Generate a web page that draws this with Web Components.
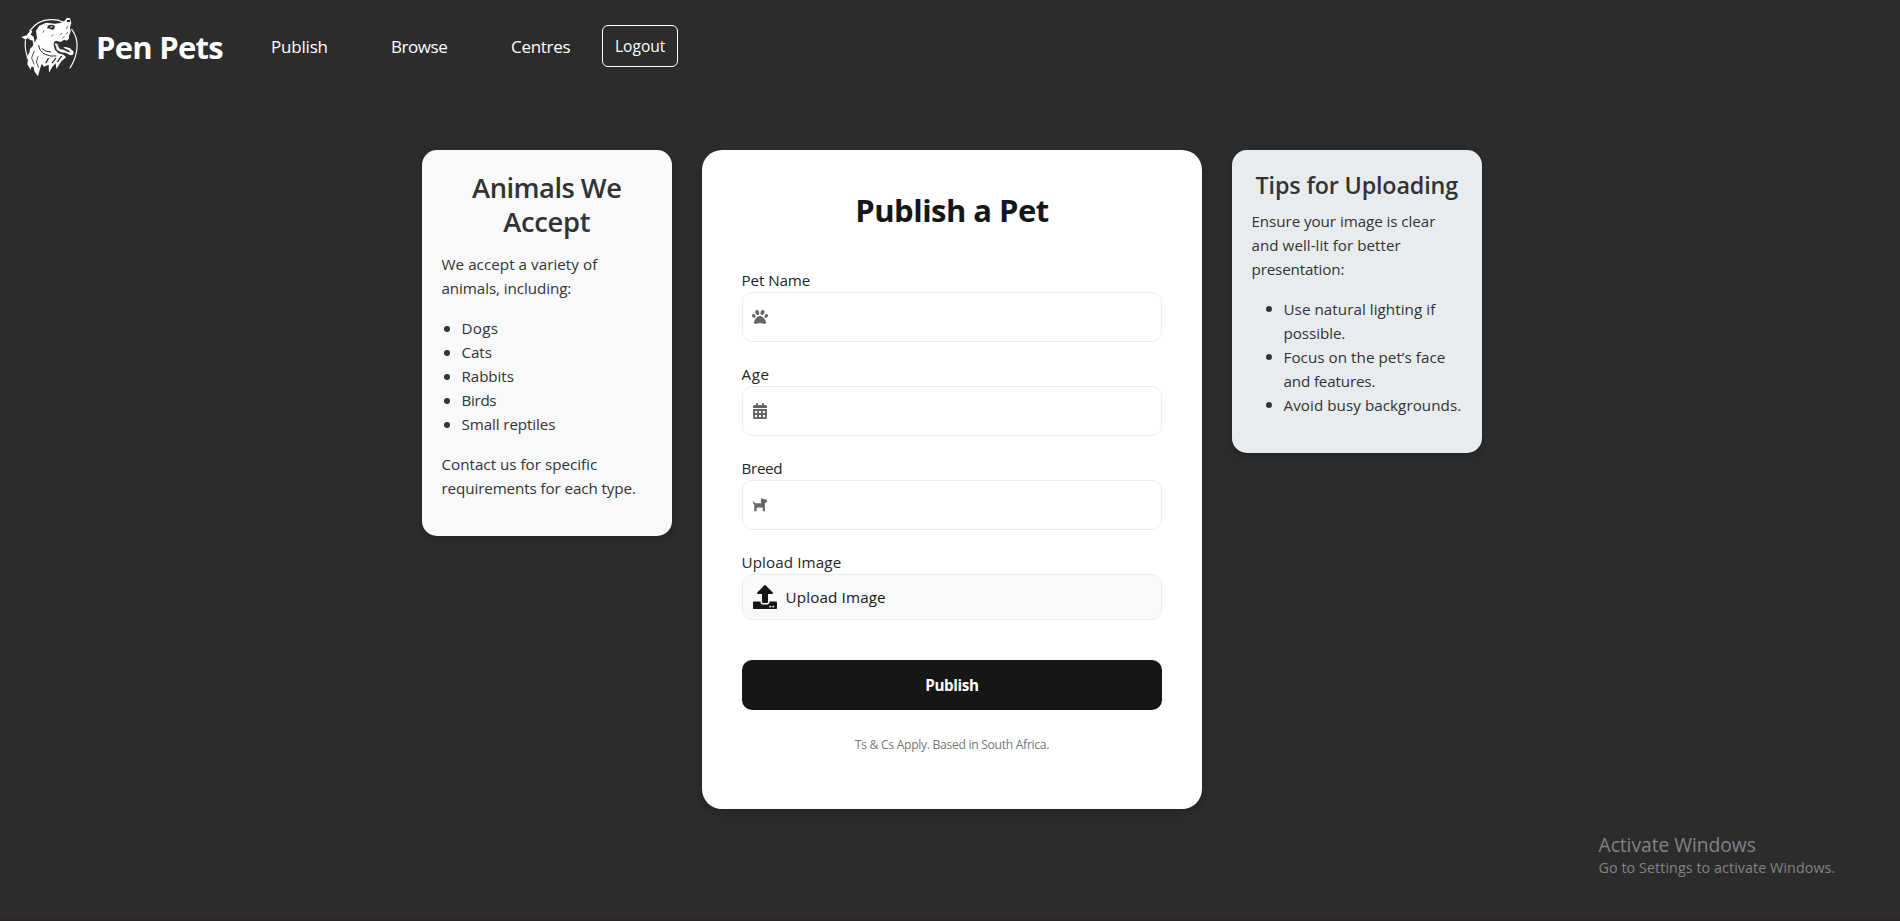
<!DOCTYPE html>
<html lang="en">
<head>
<meta charset="utf-8">
<title>Pen Pets</title>
<style>
html,body{margin:0;height:100%}
body{background:#2c2c2c;font-family:"Open Sans","Noto Sans",sans-serif;overflow:hidden}
</style>
</head>
<body>
<pets-app></pets-app>
<script>
const define = (name, html, setup) => {
  const t = document.createElement('template');
  t.innerHTML = html;
  customElements.define(name, class extends HTMLElement {
    connectedCallback() {
      if (this.shadowRoot) return;
      this.attachShadow({mode: 'open'}).append(t.content.cloneNode(true));
      if (setup) setup(this, this.shadowRoot);
    }
  });
};

/* One line of text, tracked so that it fills the width given in "w", side bearings included. */
const BEARING = 1.2;
define('text-line', `<style>:host{display:block;white-space:nowrap}span{display:inline-block}</style><span><slot></slot></span>`,
  (el, root) => {
    const s = root.querySelector('span');
    const w = parseFloat(el.getAttribute('w'));
    const n = el.textContent.length;
    if (w) s.style.letterSpacing = ((w - BEARING - s.getBoundingClientRect().width) / n).toFixed(3) + 'px';
  });

define('pets-logo', `<style>:host{display:block;width:64px;height:66px}svg{display:block}</style>
<svg width="64" height="66" viewBox="0 0 192 198">
 <g fill="none" stroke="#fff" stroke-linecap="round">
  <path d="M36 50Q58 18 98 17Q120 16 134 24" stroke-width="4"/>
  <path d="M161 46Q180 70 177 104Q173 136 156 162" stroke-width="3.500"/>
  <path d="M22 80Q19 112 33 138" stroke-width="3.500"/>
 </g>
 <path fill="#fff" d="M10 69L26 64L38 49L43 52L38 62L47 68L50 86L57 72L54 50L64 35L84 26L111 29L127 27L140 20L147 11L156 13L160 26L156 40L158 52L153 66L153 74L146 80L139 77L128 84L114 80L108 84L107 94L111 107L121 118L137 122L144 130L130 142L121 156L115 165L113 148L103 158L93 176L92 152L78 158L71 150L65 168L60 187L50 174L46 158L40 158L38 168L28 151L30 137L25 130L34 116L36 105L46 94L44 80L36 77L29 72L23 77Z"/>
 <path fill="#fff" d="M110 88L120 90L132 101L143 99L156 103L167 113L165 122L157 124L144 117L129 115L117 108Z"/>
 <path fill="#2c2c2c" d="M117 91L129 94L139 103L151 108L158 116L148 113L137 107L126 106Z"/>
 <path fill="#2c2c2c" d="M89 36Q99 28 111 36L108 46Q99 50 94 43L88 45Z"/>
 <path fill="#fff" d="M96 38L102 36L104 39L99 41Z"/>
 <path fill="#2c2c2c" d="M147 18L155 17L157 23L151 25L146 23Z"/>
 <g fill="none" stroke="#2c2c2c" stroke-linecap="round">
  <path d="M62 94Q64 113 82 121Q98 129 114 126M72 104Q84 115 98 114" stroke-width="3"/>
  <path d="M48 112L41 132L48 150M60 128L55 144L62 160" stroke-width="2.500"/>
  <path d="M91 134L84 146M113 133L103 146M130 127L119 143" stroke-width="4"/>
  <path d="M150 36L145 45M149 55L144 61M139 68L134 72M131 58L127 63M78 50L75 55M105 62L101 66" stroke-width="2"/>
 </g>
</svg>`);

const glyphs = {
  paw: [16, 16, '0 0 512 512', '<path d="M226.500 92.900c14.300 42.900-.3 86.200-32.600 96.800s-70.100-15.600-84.400-58.500s.3-86.200 32.600-96.800s70.100 15.600 84.400 58.500zM100.400 198.600c18.900 32.400 14.300 70.100-10.200 84.100s-59.700-.9-78.500-33.300S-2.700 179.300 21.800 165.300s59.700 .9 78.500 33.300zM69.200 401.200C121.600 259.900 214.700 224 256 224s134.400 35.900 186.800 177.200c3.600 9.700 5.200 20.100 5.200 30.500v1.600c0 25.800-20.900 46.700-46.700 46.700c-11.500 0-22.900-1.400-34-4.200l-88-22c-15.300-3.800-31.300-3.800-46.600 0l-88 22c-11.100 2.800-22.500 4.200-34 4.200C84.900 480 64 459.100 64 433.300v-1.600c0-10.400 1.600-20.800 5.200-30.500zM421.800 282.700c-24.500-14-29.100-51.700-10.200-84.100s54-47.300 78.500-33.300s29.100 51.700 10.200 84.100s-54 47.300-78.500 33.300zM310.100 189.700c-32.300-10.600-46.900-53.900-32.600-96.800s52.100-69.100 84.400-58.500s46.900 53.900 32.600 96.800s-52.100 69.100-84.400 58.500z"/>'],
  calendar: [14, 16, '0 0 14 16', '<path fill-rule="evenodd" d="M3 1a1 1 0 0 1 2 0v1h4V1a1 1 0 0 1 2 0v1h1.500A1.500 1.500 0 0 1 14 3.500V5H0V3.500A1.500 1.500 0 0 1 1.500 2H3zM0 6h14v8.500a1.500 1.500 0 0 1-1.500 1.500h-11A1.500 1.500 0 0 1 0 14.500zM2 8v2h2V8zM6 8v2h2V8zM10 8v2h2V8zM2 12v2h2v-2zM6 12v2h2v-2zM10 12v2h2v-2z"/>'],
  dog: [14, 14, '0 0 14 14', '<path d="M0 3.300L1.300 3.900L2 5.200H8.300L7.900 4.200V1.200L8.300 0L9.600.7L13.700 1.800L14 2.500L13.600 4.300L11.900 5.200V13.200H9.700V9.400H4.800L3.600 10.300V13.200H1.300V6.500L.2 5.500Z"/>'],
  upload: [24, 24, '0 0 512 512', '<path d="M296 384h-80c-13.300 0-24-10.700-24-24V192h-87.700c-17.800 0-26.700-21.500-14.100-34.100L242.300 5.700c7.500-7.500 19.800-7.500 27.300 0l152.200 152.200c12.600 12.600 3.700 34.100-14.100 34.100H320v168c0 13.300-10.700 24-24 24zm216-8v112c0 13.300-10.700 24-24 24H24c-13.300 0-24-10.700-24-24V376c0-13.300 10.700-24 24-24h136v8c0 30.900 25.100 56 56 56h80c30.900 0 56-25.100 56-56v-8h136c13.300 0 24 10.700 24 24zm-124 88c0-11-9-20-20-20s-20 9-20 20 9 20 20 20 20-9 20-20zm64 0c0-11-9-20-20-20s-20 9-20 20 9 20 20 20 20-9 20-20z"/>']
};
define('pet-icon', `<style>:host{display:block;flex:none}svg{display:block;fill:currentColor}</style>`, (el, root) => {
  const [w, h, box, body] = glyphs[el.getAttribute('name')];
  root.innerHTML += `<svg width="${w}" height="${h}" viewBox="${box}">${body}</svg>`;
});

define('pets-nav', `<style>
:host{display:flex;align-items:center;height:93px;color:#fff;box-sizing:border-box;padding-left:18px}
.brand{font:bold 31px/40px "Open Sans",sans-serif;margin-left:14px;width:175px}
.link{font-size:17px;font-weight:500;line-height:24px;margin-top:1px;width:120px}
.link.last{width:91px}
button{all:unset;box-sizing:border-box;width:76px;height:42px;border:1px solid #fff;border-radius:6px;font-size:15.500px;line-height:24px;padding:8px 0 8px 12px;margin-top:-1px}
</style>
<pets-logo></pets-logo>
<text-line class="brand" w="128">Pen Pets</text-line>
<text-line class="link" w="58">Publish</text-line>
<text-line class="link" w="57.500">Browse</text-line>
<text-line class="link last" w="60.500">Centres</text-line>
<button><text-line w="51.500">Logout</text-line></button>`);

define('info-card', `<style>
:host{display:block;box-sizing:border-box;width:250px;padding:20px 20px var(--foot,36px) 19.500px;border-radius:15px;background:var(--card,#f8f9fb);color:#333;box-shadow:0 4px 10px rgba(0,0,0,.2);font-size:15.200px;line-height:24px}
header{text-align:center;font-weight:600;font-size:var(--title,27.300px);line-height:var(--lead,33.600px);padding-top:1px;margin-bottom:var(--gap,14px)}
</style><header><slot name="title"></slot></header><slot></slot>`);

define('bullet-list', `<style>:host{display:block;margin:16px 0;padding-left:var(--indent,20px)}:host(:last-child){margin-bottom:0}</style><slot></slot>`);
define('bullet-item', `<style>:host{display:block;position:relative}
i{position:absolute;left:-18px;top:9.500px;width:6px;height:6px;border-radius:50%;background:#333}</style><i></i><slot></slot>`);

define('form-field', `<style>
:host{display:block;margin-bottom:20px;color:#212529;font-size:15.200px;line-height:24px}
.label{margin-left:-.5px}
.box{box-sizing:border-box;height:50px;border:1px solid #ececec;border-radius:10px;display:flex;align-items:center;padding-left:10px;color:#666;background:#fff}
:host([upload]) .box{height:46px;background:#f8f9fb;color:#151716;gap:8.500px}
</style><div class="label"><slot name="label"></slot></div><div class="box"><slot></slot></div>`);

define('publish-form', `<style>
:host{display:block;box-sizing:border-box;width:500px;height:659px;padding:40px;border-radius:20px;background:#fff;box-shadow:0 4px 10px rgba(0,0,0,.2)}
h1{margin:0 0 38px;font:bold 31px/40px "Open Sans",sans-serif;text-align:center;color:#151716}
button{all:unset;box-sizing:border-box;display:block;width:100%;height:50px;margin-top:40px;border-radius:10px;background:#151716;color:#fff;font-size:15.200px;line-height:50px;font-weight:bold;text-align:center}
footer{margin-top:25px;text-align:center;font-size:12.200px;line-height:20px;color:#777}
.icon-paw{margin-left:-1px}
</style>
<h1><text-line w="194.500">Publish a Pet</text-line></h1>
<form-field><text-line slot="label" w="70">Pet Name</text-line><pet-icon class="icon-paw" name="paw"></pet-icon></form-field>
<form-field><text-line slot="label" w="29.500">Age</text-line><pet-icon name="calendar"></pet-icon></form-field>
<form-field><text-line slot="label" w="42">Breed</text-line><pet-icon name="dog"></pet-icon></form-field>
<form-field upload><text-line slot="label" w="101">Upload Image</text-line><pet-icon name="upload"></pet-icon><text-line w="101.500">Upload Image</text-line></form-field>
<button><text-line w="54.500">Publish</text-line></button>
<footer><text-line w="195.500">Ts &amp; Cs Apply. Based in South Africa.</text-line></footer>`);

define('activation-notice', `<style>
:host{position:absolute;left:1598.500px;top:831px;color:#838383}
.a{font-size:19.300px;line-height:28px}.b{font-size:14.300px;line-height:20px;margin-top:-1px}
</style><text-line class="a" w="158.500">Activate Windows</text-line><text-line class="b" w="238">Go to Settings to activate Windows.</text-line>`);

define('pets-app', `<style>
:host{display:block;position:relative;box-sizing:border-box;height:921px;background:#2c2c2c;border-bottom:2px solid #2b2528}
main{display:flex;justify-content:center;align-items:flex-start;gap:30px;padding:57px 0 0 4px}
.tips{--card:#e8ecef;--title:23.300px;--lead:28.800px;--gap:9px;--indent:32px}
</style>
<pets-nav></pets-nav>
<main>
 <info-card>
  <text-line slot="title" w="150.500">Animals We</text-line><text-line slot="title" w="88">Accept</text-line>
  <text-line w="157">We accept a variety of</text-line><text-line w="131">animals, including:</text-line>
  <bullet-list>
   <bullet-item><text-line w="38">Dogs</text-line></bullet-item>
   <bullet-item><text-line w="31.500">Cats</text-line></bullet-item>
   <bullet-item><text-line w="53.500">Rabbits</text-line></bullet-item>
   <bullet-item><text-line w="36">Birds</text-line></bullet-item>
   <bullet-item><text-line w="95">Small reptiles</text-line></bullet-item>
  </bullet-list>
  <text-line w="157">Contact us for specific</text-line><text-line w="195.500">requirements for each type.</text-line>
 </info-card>
 <publish-form></publish-form>
 <info-card class="tips">
  <text-line slot="title" w="203.500">Tips for Uploading</text-line>
  <text-line w="185">Ensure your image is clear</text-line><text-line w="150.500">and well-lit for better</text-line><text-line w="94">presentation:</text-line>
  <bullet-list>
   <bullet-item><text-line w="153">Use natural lighting if</text-line><text-line w="63">possible.</text-line></bullet-item>
   <bullet-item><text-line w="163">Focus on the pet’s face</text-line><text-line w="93">and features.</text-line></bullet-item>
   <bullet-item><text-line w="179">Avoid busy backgrounds.</text-line></bullet-item>
  </bullet-list>
 </info-card>
</main>
<activation-notice></activation-notice>`);
</script>
</body>
</html>
